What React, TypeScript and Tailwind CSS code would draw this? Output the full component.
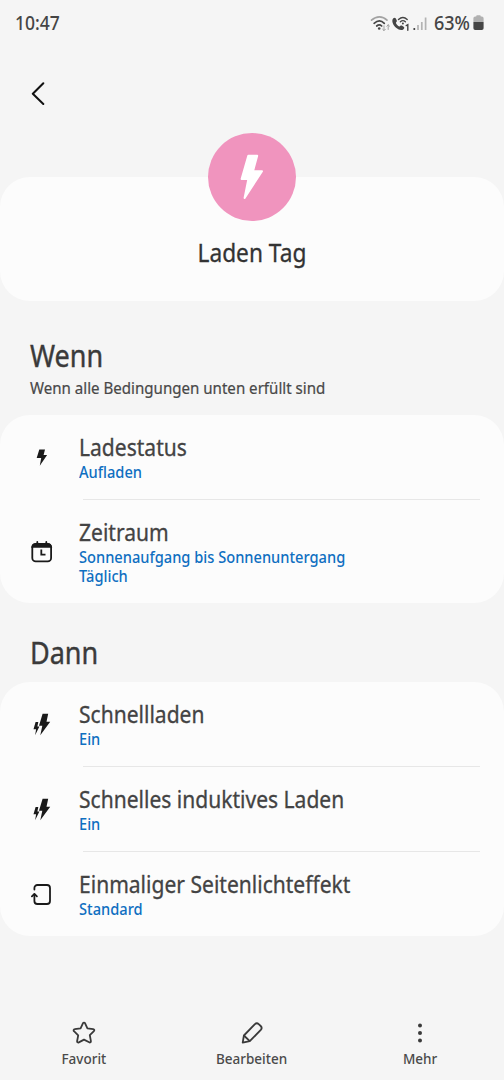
import type { ReactNode } from 'react';

type RoutineItem = {
  title: string;
  details: string[];
  icon: ReactNode;
};

const BoltIcon = () => (
  <svg viewBox="0 0 24 24" className="w-6 h-6" fill="#1a1a1a">
    <path d="M9.300 3.400h5.700l-1.400 5.500h3.500L9.800 19.800l1.400-7.700H6.700z" />
  </svg>
);

const DoubleBoltIcon = () => (
  <svg viewBox="0 0 24 24" className="w-6 h-6" fill="#1a1a1a">
    <path d="M12.600.8h5.600l-1.700 8h3.700L10.300 22.200l2-9.500H9z" />
    <path d="M5.600 9h2.700L7.400 13.600h2L5.100 22.200l1-6H3.500z" />
  </svg>
);

const CalendarIcon = () => (
  <svg viewBox="0 0 24 24" className="w-6 h-6" fill="none" stroke="#1a1a1a" strokeWidth="1.8" strokeLinecap="round">
    <rect x="2.300" y="4" width="18.800" height="17.400" rx="3.400" />
    <path d="M2.300 6.800c.3-1.600 1.600-2.600 3.400-2.600h12c1.800 0 3.100 1 3.400 2.600z" fill="#1a1a1a" />
    <path d="M7.300 4V1.900M16.300 4V1.900" />
    <path d="M11.300 9.600v5h4.200" strokeLinecap="butt" />
  </svg>
);

const EdgeLightIcon = () => (
  <svg viewBox="0 0 24 24" className="w-6 h-6" fill="none" stroke="#1a1a1a" strokeWidth="1.800" strokeLinecap="round" strokeLinejoin="round">
    <path d="M4.400 6.600V5a3 3 0 0 1 3-3h9.600a3 3 0 0 1 3 3v13a3 3 0 0 1-3 3H7.400a3 3 0 0 1-3-3v-6.700" />
    <path d="M1.900 13.400l2.500-2.500 2.500 2.500" />
  </svg>
);

const conditions: RoutineItem[] = [
  { title: 'Ladestatus', details: ['Aufladen'], icon: <BoltIcon /> },
  {
    title: 'Zeitraum',
    details: ['Sonnenaufgang bis Sonnenuntergang', 'Täglich'],
    icon: <CalendarIcon />,
  },
];

const actions: RoutineItem[] = [
  { title: 'Schnellladen', details: ['Ein'], icon: <DoubleBoltIcon /> },
  { title: 'Schnelles induktives Laden', details: ['Ein'], icon: <DoubleBoltIcon /> },
  { title: 'Einmaliger Seitenlichteffekt', details: ['Standard'], icon: <EdgeLightIcon /> },
];

const StatusBar = () => (
  <div className="flex justify-between items-center pr-[20px] pl-[15px] h-[46px] text-[#454545]">
    <span className="text-[19px] font-medium origin-left scale-x-[0.92]">10:47</span>
    <div className="flex items-center">
      <svg viewBox="0 0 57 20" className="w-[57px] h-5" fill="none" strokeLinecap="round">
        <g stroke="#454545" strokeWidth="1.700">
          <path d="M1.500 7.200c5-4.500 11-4.500 15.500 0" stroke="#a3a3a3" />
          <path d="M4.100 10.300c3.400-3 7.200-3 10.200 0M6.700 13c1.700-1.500 3.500-1.500 5 0" />
        </g>
        <circle cx="9.200" cy="15.500" r="1.300" fill="#454545" />
        <path d="M14 12.800v4.700m-1.400-1.300 1.400 1.400 1.400-1.400M18.200 16.500v-4.700m-1.400 1.400 1.400-1.400 1.400 1.400" stroke="#a3a3a3" strokeWidth="1" />
        <path d="M23.300 5.300c1-.9 2-.9 2.500.1l1 2c.400.9-.6 1.600-.9 2.300.4 1.700 2 3.200 3.500 3.700.8-.3 1.500-1.200 2.400-.8l1.900 1.100c.9.6.7 1.700-.2 2.500-1.700 1.500-4.600 1-7.100-1.100-3.300-2.800-5.400-7.300-3.100-9.800z" fill="#454545" />
        <path d="M28.500 6.500c2.700-2.500 6.100-2.500 8.700 0M30.400 8.800c1.500-1.400 3.500-1.400 5 0" stroke="#454545" strokeWidth="1.400" />
        <circle cx="32.900" cy="10.500" r="1" fill="#454545" />
        <path d="M36.200 12.600l1.600-.9v5.500" stroke="#454545" strokeWidth="1.400" />
        <path d="M44.300 15v2" stroke="#454545" strokeWidth="1.700" strokeLinecap="butt" />
        <path d="M48 12v5M51.800 9v8M55.600 4.500V17" stroke="#b3b3b3" strokeWidth="1.700" strokeLinecap="butt" />
      </svg>
      <span className="ml-[6px] text-[19px] font-medium scale-x-[0.95]">63%</span>
      <svg viewBox="0 0 11 16" className="ml-[2px] w-[11px] h-4">
        <path d="M3.200 1.500C3.200.6 3.700.2 4.500.2h2c.8 0 1.300.4 1.300 1.300h1A1.800 1.800 0 0 1 10.600 3.300V7H.4V3.300a1.800 1.800 0 0 1 1.800-1.800z" fill="#b0b0b0" />
        <path d="M.4 7h10.200v6.200a1.800 1.800 0 0 1-1.800 1.800H2.200a1.800 1.800 0 0 1-1.800-1.800z" fill="#454545" />
      </svg>
    </div>
  </div>
);

const RoutineRow = ({ item, last }: { item: RoutineItem; last: boolean }) => (
  <>
    <div className="flex items-center pt-[18px] pb-[17px] pl-[30px]">
      <div className="w-[49px] shrink-0">{item.icon}</div>
      <div className="origin-left scale-x-[0.915]">
        <h3 className="text-[23px] leading-7 text-[#434343] [-webkit-text-stroke:0.3px]">{item.title}</h3>
        <div className="mt-[2px]">
          {item.details.map((detail) => (
            <p key={detail} className="text-base font-medium leading-[19px] text-[#0f6fc1]">
              {detail}
            </p>
          ))}
        </div>
      </div>
    </div>
    {!last && <div className="mr-6 ml-[83px] h-px bg-[#e7e7e7]" />}
  </>
);

const RoutineCard = ({ items }: { items: RoutineItem[] }) => (
  <div className="bg-[#fcfcfc] rounded-[30px]">
    {items.map((item, index) => (
      <RoutineRow key={item.title} item={item} last={index === items.length - 1} />
    ))}
  </div>
);

const BottomBar = () => (
  <nav className="grid grid-cols-3 mt-auto h-[60px] text-[15px] font-medium leading-5 text-[#4a4a4a]">
    <button className="flex flex-col items-center">
      <svg viewBox="0 0 26 26" className="w-[26px] h-[26px]" fill="none" stroke="#3a3a3a" strokeWidth="1.800" strokeLinejoin="round">
        <path d="M12 3.200c.4-.9 1.600-.9 2 0l2.400 5.200 5.800.7c1.100.2 1.500 1.300.7 2L18.800 15.200l1.100 5.900c.2 1-.8 1.700-1.700 1.200L13 19.600l-5.200 2.800c-.9.5-1.900-.2-1.700-1.200l1.100-5.900-4.200-4.100c-.8-.7-.4-1.900.7-2l5.900-.8z" />
      </svg>
      <span className="mt-[2px] scale-x-[0.9]">Favorit</span>
    </button>
    <button className="flex flex-col items-center">
      <svg viewBox="0 0 26 26" className="w-[26px] h-[26px]" fill="none" stroke="#3a3a3a" strokeWidth="1.800" strokeLinejoin="round">
        <path d="M3.700 22.600l1.200-7.100L15.900 4.200c1.200-1.200 2.600-1.200 3.800-.1l2 1.900c1.200 1.200 1.200 2.600.1 3.800L10.800 21.200z" />
        <path d="M4.900 15.500l5.900 5.700" />
      </svg>
      <span className="mt-[2px] scale-x-[0.9]">Bearbeiten</span>
    </button>
    <button className="flex flex-col items-center">
      <svg viewBox="0 0 26 26" className="w-[26px] h-[26px]" fill="#3a3a3a">
        <circle cx="13" cy="5.500" r="2" />
        <circle cx="13" cy="13" r="2" />
        <circle cx="13" cy="20.500" r="2" />
      </svg>
      <span className="mt-[2px] scale-x-[0.9]">Mehr</span>
    </button>
  </nav>
);

export default function App() {
  return (
    <div className="flex overflow-hidden flex-col w-[504px] h-[1080px] bg-[#f5f5f5] font-['Noto_Sans',sans-serif]">
      <StatusBar />

      <header className="flex items-center pl-[26px] h-[87px]">
        <button aria-label="Zurück">
          <svg viewBox="0 0 24 24" className="w-6 h-6 mt-[7px]" fill="none" stroke="#111" strokeWidth="2" strokeLinecap="round" strokeLinejoin="round">
            <path d="M17.300 2.200 6.800 12.700l10.500 10.300" />
          </svg>
        </button>
      </header>

      <section className="flex flex-col items-center mt-11 h-[124px] bg-[#fcfcfc] rounded-[30px]">
        <div className="flex justify-center items-center -mt-11 w-[88px] h-[88px] bg-[#f094be] rounded-full">
          <svg viewBox="0 0 24 46" className="w-6 h-[46px]" fill="#fff" stroke="#fff" strokeWidth="2" strokeLinejoin="round">
            <path d="M8.300 1.800h8.900l-4.200 15.400h9L4.600 44l3.800-19H1.600z" />
          </svg>
        </div>
        <h1 className="mt-[15px] text-[25px] leading-8 text-[#333] scale-x-[0.908] [-webkit-text-stroke:0.3px]">Laden Tag</h1>
      </section>

      <section className="mt-9">
        <div className="px-[30px] h-[78px]">
          <h2 className="text-[30px] leading-[38px] text-[#3a3a3a] origin-left scale-x-[0.9] [-webkit-text-stroke:0.4px]">Wenn</h2>
          <p className="mt-[3px] text-base leading-5 text-[#484848] origin-left scale-x-[0.943] [-webkit-text-stroke:0.2px]">
            Wenn alle Bedingungen unten erfüllt sind
          </p>
        </div>
        <RoutineCard items={conditions} />
      </section>

      <section className="px-0 mt-[31px]">
        <h2 className="ml-[30px] h-12 text-[30px] leading-[38px] text-[#3a3a3a] origin-left scale-x-[0.9] [-webkit-text-stroke:0.4px]">Dann</h2>
        <RoutineCard items={actions} />
      </section>

      <BottomBar />
    </div>
  );
}
